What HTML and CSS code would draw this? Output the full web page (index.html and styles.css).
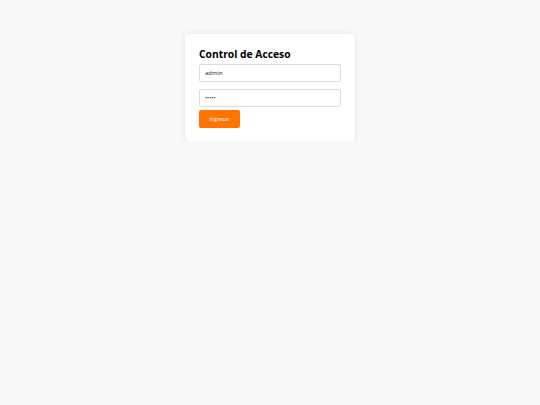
FILE: index.html
```html
<!DOCTYPE html>
<html lang="es">
<head>
<meta charset="utf-8">
<title>Control de Acceso</title>
<link rel="stylesheet" href="styles.css">
</head>
<body>
<div class="page">
  <form class="card">
    <h2 class="title">Control de Acceso</h2>
    <input class="field field-user" type="text" value="admin">
    <input class="field field-pass" type="password" value="admin">
    <button class="btn" type="button">Ingresar</button>
  </form>
</div>
</body>
</html>
```
FILE: styles.css
```css
html, body {
  margin: 0;
  padding: 0;
  background: #f8f8f8;
  font-family: "Open Sans", "Noto Sans", sans-serif;
}
.page {
  display: flex;
  justify-content: center;
  padding-top: 34px;
}
.card {
  width: 170px;
  box-sizing: border-box;
  padding: 14px 14px 13px;
  background: #fff;
  border-radius: 4px;
  box-shadow: 0 0 6px rgba(0, 0, 0, 0.09);
  display: flex;
  flex-direction: column;
  align-items: flex-start;
}
.title {
  margin: 0 0 3px;
  font-size: 10.3px;
  line-height: 13px;
  font-weight: 700;
  color: #000;
}
.field {
  width: 142px;
  height: 18px;
  box-sizing: border-box;
  border: 1px solid #dddddd;
  border-radius: 2px;
  padding: 0 5px;
  font-family: "Open Sans", "Noto Sans", sans-serif;
  font-size: 6px;
  color: #222;
  background: #fff;
  outline: none;
}
.field-user {
  margin-bottom: 7px;
}
.field-pass {
  margin-bottom: 3px;
  font-size: 5.5px;
}
.btn {
  width: 41px;
  height: 18px;
  border: none;
  border-radius: 2px;
  background: #ff7300;
  color: #fff;
  font-family: "Open Sans", "Noto Sans", sans-serif;
  font-size: 5.3px;
  padding: 0;
}
```
